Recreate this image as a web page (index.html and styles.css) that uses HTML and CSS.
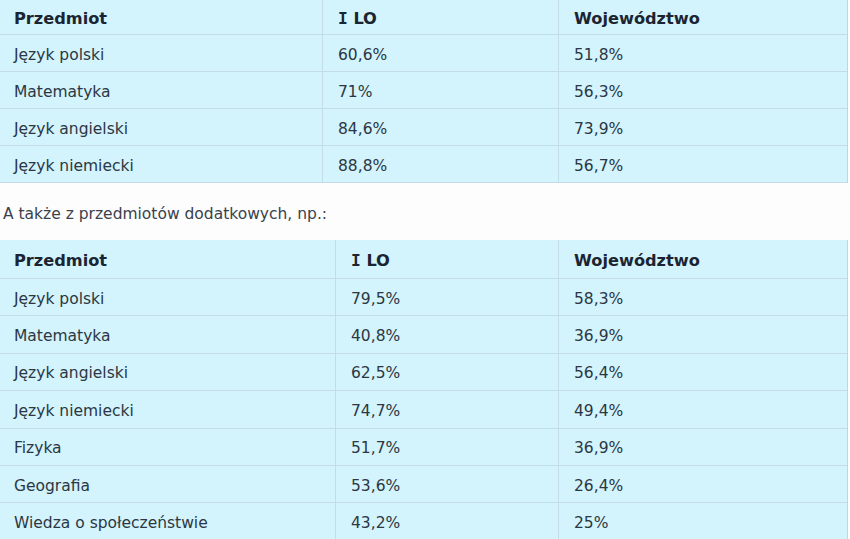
FILE: index.html
```html
<!DOCTYPE html>
<html lang="pl">
<head>
<meta charset="utf-8">
<link rel="stylesheet" href="styles.css">
</head>
<body>
<table class="grid t1">
  <colgroup><col class="c1a"><col class="c2a"><col class="c3"></colgroup>
  <tr class="head"><th>Przedmiot</th><th><span class="serif-i">I</span> LO</th><th>Województwo</th></tr>
  <tr><td>Język polski</td><td>60,6%</td><td>51,8%</td></tr>
  <tr><td>Matematyka</td><td>71%</td><td>56,3%</td></tr>
  <tr><td>Język angielski</td><td>84,6%</td><td>73,9%</td></tr>
  <tr><td>Język niemiecki</td><td>88,8%</td><td>56,7%</td></tr>
</table>
<p class="note">A także z przedmiotów dodatkowych, np.:</p>
<table class="grid t2">
  <colgroup><col class="c1b"><col class="c2b"><col class="c3"></colgroup>
  <tr class="head"><th>Przedmiot</th><th><span class="serif-i">I</span> LO</th><th>Województwo</th></tr>
  <tr><td>Język polski</td><td>79,5%</td><td>58,3%</td></tr>
  <tr><td>Matematyka</td><td>40,8%</td><td>36,9%</td></tr>
  <tr><td>Język angielski</td><td>62,5%</td><td>56,4%</td></tr>
  <tr><td>Język niemiecki</td><td>74,7%</td><td>49,4%</td></tr>
  <tr><td>Fizyka</td><td>51,7%</td><td>36,9%</td></tr>
  <tr><td>Geografia</td><td>53,6%</td><td>26,4%</td></tr>
  <tr><td>Wiedza o społeczeństwie</td><td>43,2%</td><td>25%</td></tr>
</table>
</body>
</html>
```
FILE: styles.css
```css
html, body {
  margin: 0;
  padding: 0;
  background: #fdfdfe;
}
body {
  font-family: "DejaVu Sans", Verdana, sans-serif;
  font-size: 15.5px;
  color: #2b3743;
  overflow: hidden;
}
.grid {
  width: 848px;
  border-collapse: separate;
  border-spacing: 0;
  table-layout: fixed;
  background: #d3f3fd;
  border-right: 1px solid #c3d5de;
}
.c1a { width: 322px; }
.c2a { width: 236px; }
.c1b { width: 335px; }
.c2b { width: 223px; }
.grid th,
.grid td {
  text-align: left;
  vertical-align: middle;
  padding: 3px 0 0 14px;
  border-bottom: 1px solid #c2dde8;
  white-space: nowrap;
}
.grid th + th,
.grid td + td {
  border-left: 1px solid #c2dde8;
  padding-left: 15px;
}
.grid th {
  font-weight: bold;
  font-size: 16.2px;
  color: #1b2531;
}
.t1 tr { height: 37px; }
.t1 tr.head { height: 35px; }
.t2 tr { height: 37.4px; }
.t2 tr.head { height: 39px; }
.serif-i {
  font-family: "DejaVu Sans Mono", monospace;
  font-weight: bold;
}
.note {
  margin: 0;
  height: 52px;
  line-height: 52px;
  padding: 5px 0 0 3px;
  color: #3a424c;
  background: #fdfdfe;
}
```
